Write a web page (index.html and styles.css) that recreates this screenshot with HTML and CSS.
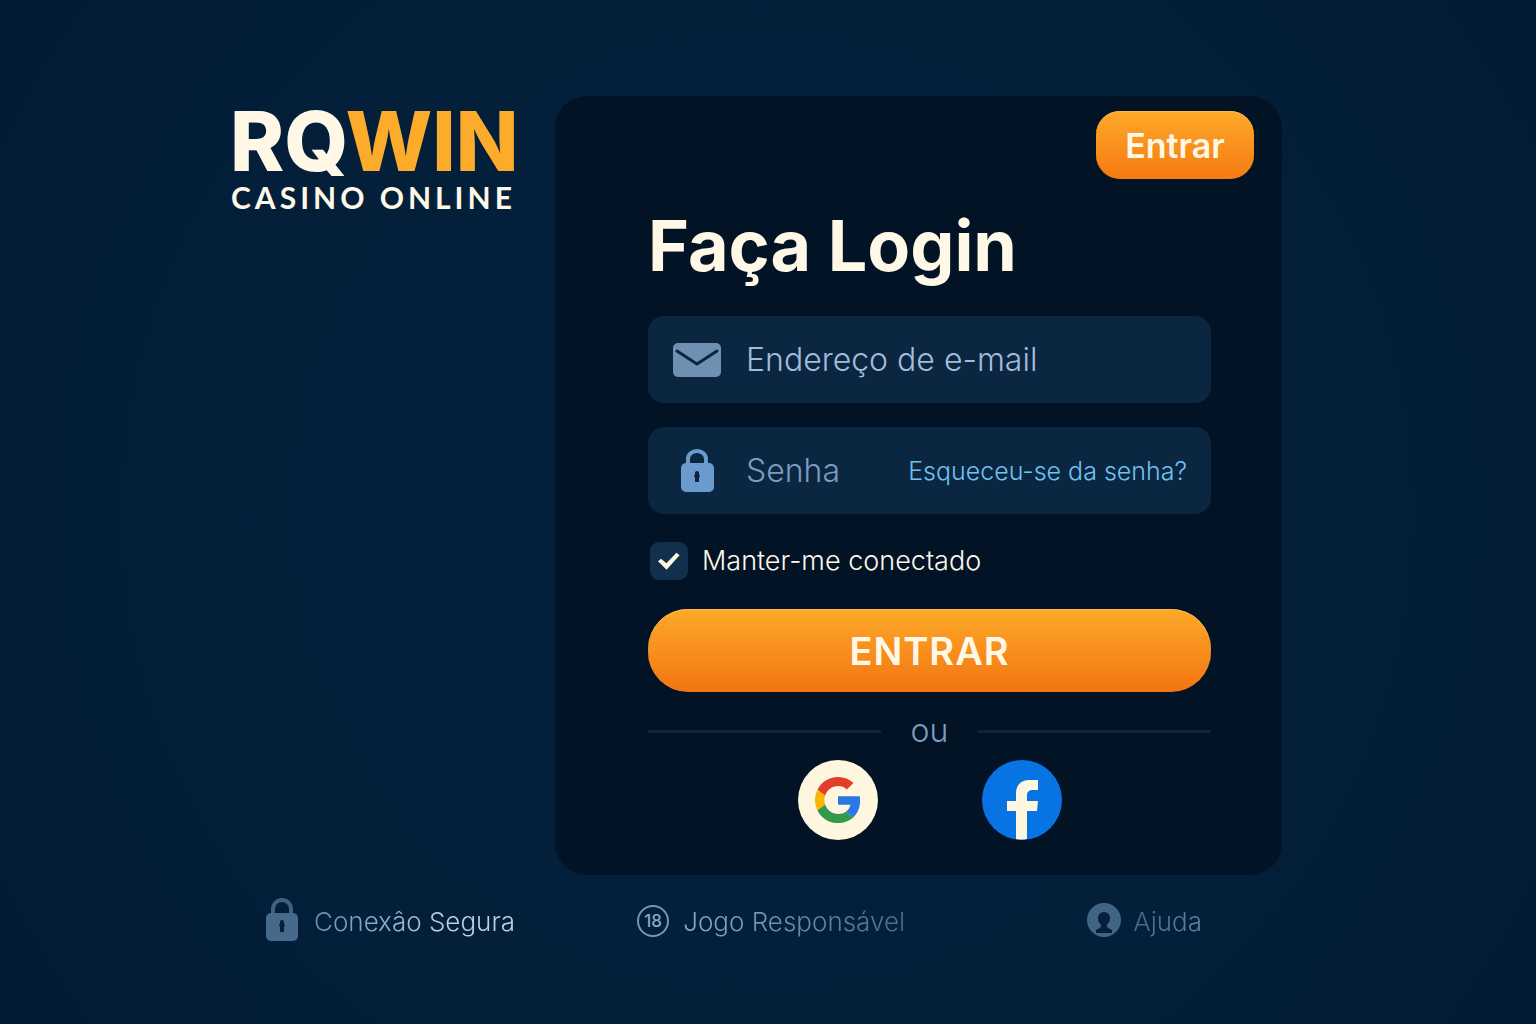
FILE: index.html
```html
<!DOCTYPE html>
<html lang="pt">
  <head>
    <meta charset="utf-8">
    <meta name="viewport" content="width=device-width, initial-scale=1">
    <title>RQWIN Casino Online - Login</title>
    <link rel="stylesheet" href="styles.css">
  </head>
  <body>
    <main class="page">
      <div class="brand">
        <div class="brand-name">RQ<span class="brand-win">WIN</span></div>
        <div class="brand-tag">CASINO ONLINE</div>
      </div>

      <section class="card">
        <div class="card-top">
          <button class="top-button" type="button">Entrar</button>
        </div>

        <form class="login-form">
          <h1 class="title">Faça Login</h1>

          <div class="field">
            <svg class="field-icon" width="50" height="44" viewBox="0 0 50 44" aria-hidden="true">
              <rect x="1" y="5" width="48" height="34" rx="5" fill="#7090b1"/>
              <path d="M5 13 L25 26 L45 13" fill="none" stroke="#0a2540" stroke-width="3" stroke-linecap="round" stroke-linejoin="round"/>
            </svg>
            <input class="field-input" type="email" placeholder="Endereço de e-mail" aria-label="Endereço de e-mail">
          </div>

          <div class="field">
            <svg class="field-icon" width="50" height="44" viewBox="0 0 50 44" aria-hidden="true">
              <path d="M16 16 V10 a9 8 0 0 1 18 0 V16" fill="none" stroke="#6b9bcd" stroke-width="4"/>
              <rect x="9" y="14" width="33" height="29" rx="5" fill="#6b9bcd"/>
              <path d="M25 22 a2 2 0 0 1 2 2 v1 a3 3 0 0 1 0 4 v4 h-4 v-4 a3 3 0 0 1 0 -4 v-1 a2 2 0 0 1 2 -2z" fill="#0a2540"/>
            </svg>
            <input class="field-input field-password" type="password" placeholder="Senha" aria-label="Senha">
            <a class="forgot" href="#">Esqueceu-se da senha?</a>
          </div>

          <label class="remember">
            <input class="remember-box" type="checkbox" checked>
            Manter-me conectado
          </label>

          <button class="submit-button" type="submit">ENTRAR</button>

          <div class="divider">ou</div>

          <div class="social">
            <button class="social-button" type="button" aria-label="Google">
              <svg width="80" height="80" viewBox="0 0 80 80">
                <circle cx="40" cy="40" r="40" fill="#fff6df"/>
                <g transform="translate(17 17) scale(.96)">
                  <path d="M24 9.500c3.540 0 6.710 1.220 9.210 3.600l6.850-6.850C35.900 2.380 30.470 0 24 0 14.620 0 6.510 5.380 2.560 13.220l7.980 6.190C12.430 13.720 17.740 9.500 24 9.500z" fill="#e33e2b"/>
                  <path d="M46.980 24.550c0-1.570-.150-3.090-.380-4.550H24v9.020h12.940c-.580 2.960-2.260 5.480-4.780 7.180l7.730 6c4.510-4.180 7.090-10.360 7.090-17.650z" fill="#2b78e4"/>
                  <path d="M10.530 28.590c-.480-1.450-.760-2.990-.760-4.590s.270-3.140.760-4.590l-7.980-6.190C.920 16.460 0 20.120 0 24c0 3.880.920 7.540 2.560 10.780l7.970-6.190z" fill="#fbb605"/>
                  <path d="M24 48c6.480 0 11.930-2.130 15.890-5.810l-7.730-6c-2.150 1.450-4.920 2.300-8.160 2.300-6.260 0-11.570-4.220-13.470-9.910l-7.980 6.190C6.510 42.620 14.620 48 24 48z" fill="#329a4c"/>
                </g>
              </svg>
            </button>
            <button class="social-button" type="button" aria-label="Facebook">
              <svg width="80" height="80" viewBox="0 0 80 80">
                <circle cx="40" cy="40" r="40" fill="#0874e4"/>
                <path d="M34 79 V51 H25 V41 H34 V34 C34 25 39 20 47 20 H56 V30 H51 C47 30 45 32 45 35 V41 H56 L55 51 H45 V79 Q40 80 34 79z" fill="#fff6df"/>
              </svg>
            </button>
          </div>
        </form>
      </section>
    </main>

    <footer class="footer">
      <a class="footer-link secure" href="#">
        <svg width="32" height="46" viewBox="0 0 32 46" aria-hidden="true">
          <path d="M7 17 V11 a9 9 0 0 1 18 0 V17" fill="none" stroke="#3d6284" stroke-width="4"/>
          <rect x="0" y="15" width="32" height="28" rx="5" fill="#46698c"/>
          <path d="M16 22 a2 2 0 0 1 2 2 v1 a3 3 0 0 1 0 4 v5 h-4 v-5 a3 3 0 0 1 0 -4 v-1 a2 2 0 0 1 2 -2z" fill="#04203c"/>
        </svg>
        <span class="footer-text">Conexâo Segura</span>
      </a>
      <a class="footer-link responsible" href="#">
        <span class="age">18</span>
        <span class="footer-text">Jogo Responsável</span>
      </a>
      <a class="footer-link help" href="#">
        <svg width="35" height="35" viewBox="0 0 35 35" aria-hidden="true">
          <circle cx="17" cy="17" r="17" fill="#406484"/>
          <path d="M17 9 c4 0 6 3 6 6 c0 4 -2 5 -3 7 c0 3 1 3 5 5 v3 h-16 v-3 c4 -2 5 -2 5 -5 c-1 -2 -3 -3 -3 -7 c0 -3 2 -6 6 -6z" fill="#04203c"/>
        </svg>
        <span class="footer-text">Ajuda</span>
      </a>
    </footer>
  </body>
</html>
```
FILE: styles.css
```css
* {
  box-sizing: border-box;
}

body {
  margin: 0;
  min-height: 100vh;
  padding: 96px 254px 40px 230px;
  background: radial-gradient(circle at 50% 50%, #03213e 0%, #031f3a 60%, #021b35 100%);
  color: #fff8e6;
  font-family: Inter, "Liberation Sans", sans-serif;
}

button {
  border: none;
  padding: 0;
  font-family: inherit;
  color: #fff8e6;
  cursor: pointer;
}

.page {
  display: flex;
  align-items: flex-start;
  gap: 39px;
}

/* logo */
.brand {
  flex: none;
  width: 286px;
  padding-top: 6px;
  white-space: nowrap;
}

.brand-name {
  font-size: 82px;
  font-weight: 800;
  line-height: 80px;
}

.brand-win {
  color: #fdab2b;
}

.brand-tag {
  padding-left: 1px;
  font-family: Lato, sans-serif;
  font-size: 30px;
  font-weight: 700;
  line-height: 30px;
  letter-spacing: 4px;
}

/* card */
.card {
  flex: 1;
  min-width: 0;
  padding: 15px 28px 35px;
  border-radius: 32px;
  background: #021326;
}

.card-top {
  display: flex;
  justify-content: flex-end;
}

.top-button {
  width: 158px;
  height: 68px;
  border-radius: 24px;
  background: linear-gradient(#fda929, #f57a12);
  box-shadow: inset 0 1px 0 #ffb94a;
  font-size: 34px;
  font-weight: 600;
}

.login-form {
  display: flex;
  flex-direction: column;
  padding: 0 43px 0 65px;
}

.title {
  margin: 23px 0 26px;
  font-size: 70px;
  font-weight: 700;
  line-height: 88px;
}

.field {
  display: flex;
  align-items: center;
  height: 87px;
  margin-bottom: 24px;
  padding: 0 24px;
  border-radius: 16px;
  background: #0b2641;
}

.field-icon {
  flex: none;
  margin-right: 24px;
}

.field-input {
  flex: 1;
  min-width: 0;
  padding: 0;
  border: none;
  outline: none;
  background: transparent;
  color: #fff8e6;
  font-family: inherit;
  font-size: 32px;
  font-weight: 300;
}

.field-input::placeholder {
  color: #a3bcdc;
  opacity: 1;
}

.field-password::placeholder {
  color: #7c9bc0;
}

.forgot {
  color: #6fc3f2;
  font-size: 25px;
  font-weight: 300;
  text-decoration: none;
}

.remember {
  display: flex;
  align-items: center;
  gap: 14px;
  margin: 4px 0 29px 2px;
  font-size: 27px;
  font-weight: 300;
  line-height: 38px;
}

.remember-box {
  appearance: none;
  display: grid;
  place-items: center;
  width: 38px;
  height: 38px;
  margin: 0;
  border-radius: 9px;
  background: #12304d;
}

.remember-box:checked::before {
  content: "";
  width: 22px;
  height: 18px;
  background: #fff8dc;
  clip-path: polygon(0 52%, 14% 38%, 38% 62%, 84% 4%, 98% 18%, 39% 98%);
}

.submit-button {
  height: 83px;
  border-radius: 40px;
  background: linear-gradient(#fda929, #f37512);
  box-shadow: inset 0 1px 0 #ffb94a;
  font-size: 38px;
  font-weight: 600;
  letter-spacing: 1px;
}

.divider {
  display: flex;
  align-items: center;
  gap: 30px;
  margin: 19px 0 9px;
  color: #7f9cbd;
  font-size: 32px;
  font-weight: 300;
  line-height: 40px;
}

.divider::before,
.divider::after {
  content: "";
  flex: 1;
  height: 3px;
  background: #0d2440;
}

.social {
  display: flex;
  justify-content: center;
  gap: 104px;
}

.social-button {
  height: 80px;
  border-radius: 50%;
  background: none;
}

.social-button svg {
  display: block;
}

/* footer */
.footer {
  display: grid;
  grid-template-columns: 372fr 451fr 113fr;
  align-items: center;
  margin-top: 20px;
  padding: 0 80px 0 36px;
}

.footer-link {
  display: flex;
  align-items: center;
  font-size: 26px;
  font-weight: 300;
  line-height: 48px;
  text-decoration: none;
  white-space: nowrap;
}

.footer-text {
  padding-top: 3px;
  background-clip: text;
  color: transparent;
}

.secure {
  gap: 16px;
}

.secure .footer-text {
  background-image: linear-gradient(90deg, #6a8bab, #bcd2ea 70%);
}

.responsible {
  gap: 14px;
}

.responsible .footer-text {
  background-image: linear-gradient(90deg, #8ba8c8, #4a6b8d);
}

.help {
  gap: 11px;
}

.help .footer-text {
  background-image: linear-gradient(90deg, #45678a, #5f7fa0);
}

.age {
  width: 32px;
  height: 32px;
  border: 2px solid #7895b4;
  border-radius: 50%;
  color: #8ba8c8;
  font-size: 17px;
  font-weight: 500;
  line-height: 28px;
  text-align: center;
}

@media (max-width: 1200px) {
  body {
    padding: 40px 24px;
  }

  .page {
    flex-direction: column;
  }

  .card {
    width: 100%;
  }
}
```
